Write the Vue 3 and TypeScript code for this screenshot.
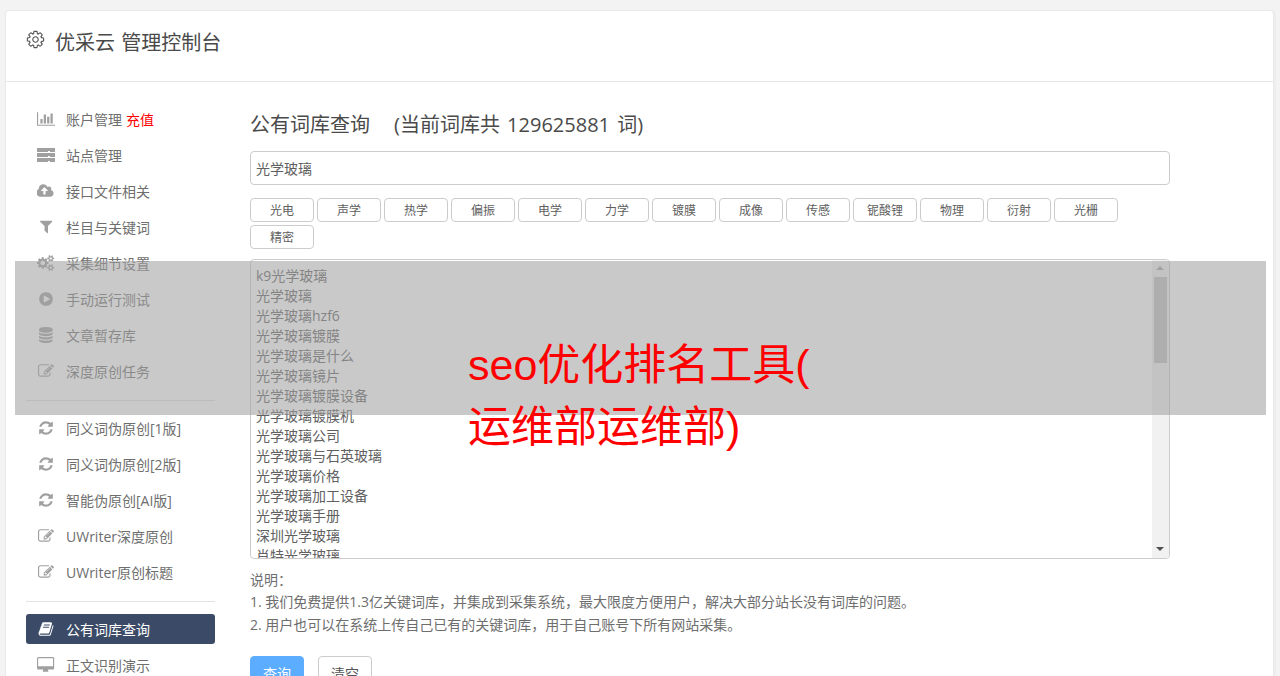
<script setup lang="ts">
interface Icon { box: string; d: string }
interface Item { label: string; icon: Icon; extra?: string; active?: boolean }

const chart: Icon = { box: '0 0 2048 1792', d: 'M640 896v512h-256v-512h256zm384-512v1024h-256v-1024h256zm1024 1152v128h-2048v-1536h128v1408h1920zm-640-896v768h-256v-768h256zm384-384v1152h-256v-1152h256z' }
const server: Icon = { box: '0 0 18 16', d: 'M0 1h18v4h-5v-1h-2v1h-11zM0 6h18v4h-5v-1h-2v1h-11zM0 11h18v4h-5v-1h-2v1h-11z' }
const cloud: Icon = { box: '0 0 1920 1792', d: 'M1216 864q0-14-9-23l-352-352q-9-9-23-9t-23 9l-351 351q-10 12-10 24 0 14 9 23t23 9h224v352q0 13 9.5 22.5t22.5 9.5h192q13 0 22.5-9.5t9.5-22.5v-352h224q13 0 22.5-9.5t9.5-22.5zm640 288q0 159-112.5 271.5t-271.5 112.5h-1088q-185 0-316.5-131.5t-131.5-316.5q0-130 70-240t188-165q-2-30-2-43 0-212 150-362t362-150q156 0 285.5 87t188.5 231q71-62 166-62 106 0 181 75t75 181q0 76-41 138 130 31 213.5 135.5t83.5 238.5z' }
const filter: Icon = { box: '0 0 1408 1792', d: 'M1403 229q17 41-14 70l-493 493v742q0 42-39 59-13 5-25 5-27 0-45-19l-256-256q-19-19-19-45v-486l-493-493q-31-29-14-70 17-39 59-39h1280q42 0 59 39z' }
const cogs: Icon = { box: '0 0 1920 1792', d: 'M896 896q0-106-75-181t-181-75-181 75-75 181 75 181 181 75 181-75 75-181zm768 512q0-52-38-90t-90-38-90 38-38 90q0 53 37.5 90.5t90.5 37.5 90.5-37.5 37.5-90.5zm0-1024q0-52-38-90t-90-38-90 38-38 90q0 53 37.5 90.5t90.5 37.5 90.5-37.5 37.5-90.5zm-384 421v185q0 10-7 19.5t-16 10.5l-155 24q-11 35-32 76 34 48 90 115 7 11 7 20 0 12-7 19-23 30-82.5 89.5t-78.5 59.5q-11 0-21-7l-115-90q-37 19-77 31-11 108-23 155-7 24-30 24h-186q-11 0-20-7.5t-10-17.5l-23-153q-34-10-75-31l-118 89q-7 7-20 7-11 0-21-8-144-133-144-160 0-9 7-19 10-14 41-53t47-61q-23-44-35-82l-152-24q-10-1-17-9.5t-7-19.5v-185q0-10 7-19.5t16-10.5l155-24q11-35 32-76-34-48-90-115-7-11-7-20 0-12 7-20 22-30 82-89t79-59q11 0 21 7l115 90q34-18 77-32 11-108 23-154 7-24 30-24h186q11 0 20 7.5t10 17.5l23 153q34 10 75 31l118-89q8-7 20-7 11 0 21 8 144 133 144 160 0 8-7 19-12 16-42 54t-45 60q23 48 34 82l152 23q10 2 17 10.5t7 19.5zm640 533v140q0 16-149 31-12 27-30 52 51 113 51 138 0 4-4 7-122 71-124 71-8 0-46-47t-52-68q-20 2-30 2t-30-2q-14 21-52 68t-46 47q-2 0-124-71-4-3-4-7 0-25 51-138-18-25-30-52-149-15-149-31v-140q0-16 149-31 13-29 30-52-51-113-51-138 0-4 4-7 4-2 35-20t59-34 30-16q8 0 46 46.5t52 67.5q20-2 30-2t30 2q51-71 92-112l6-2q4 0 124 70 4 3 4 7 0 25-51 138 17 23 30 52 149 15 149 31zm0-1024v140q0 16-149 31-12 27-30 52 51 113 51 138 0 4-4 7-122 71-124 71-8 0-46-47t-52-68q-20 2-30 2t-30-2q-14 21-52 68t-46 47q-2 0-124-71-4-3-4-7 0-25 51-138-18-25-30-52-149-15-149-31v-140q0-16 149-31 13-29 30-52-51-113-51-138 0-4 4-7 4-2 35-20t59-34 30-16q8 0 46 46.5t52 67.5q20-2 30-2t30 2q51-71 92-112l6-2q4 0 124 70 4 3 4 7 0 25-51 138 17 23 30 52 149 15 149 31z' }
const play: Icon = { box: '0 0 1792 1792', d: 'M896 128q209 0 385.5 103t279.5 279.5 103 385.5-103 385.5-279.5 279.5-385.5 103-385.5-103-279.5-279.5-103-385.5 103-385.5 279.5-279.5 385.5-103zm384 823q32-18 32-55t-32-55l-544-320q-31-19-64-1-32 19-32 56v640q0 37 32 56 16 8 32 8 17 0 32-9z' }
const db: Icon = { box: '0 0 1536 1792', d: 'M768 768q237 0 443-43t325-127v170q0 69-103 128t-280 93.5-385 34.5-385-34.5-280-93.5-103-128v-170q119 84 325 127t443 43zm0 768q237 0 443-43t325-127v170q0 69-103 128t-280 93.5-385 34.5-385-34.5-280-93.5-103-128v-170q119 84 325 127t443 43zm0-384q237 0 443-43t325-127v170q0 69-103 128t-280 93.5-385 34.5-385-34.5-280-93.5-103-128v-170q119 84 325 127t443 43zm0-1152q208 0 385 34.5t280 93.5 103 128v128q0 69-103 128t-280 93.5-385 34.5-385-34.5-280-93.5-103-128v-128q0-69 103-128t280-93.5 385-34.5z' }
const edit: Icon = { box: '0 0 1880 1792', d: 'M888 1184l116-116-152-152-116 116v56h96v96h56zm440-720q-16-16-33 1l-350 350q-17 17-1 33t33-1l350-350q17-17 1-33zm80 594v190q0 119-84.5 203.5t-203.5 84.5h-832q-119 0-203.5-84.5t-84.5-203.5v-832q0-119 84.5-203.5t203.5-84.5h832q63 0 117 25 15 7 18 23 3 17-9 29l-49 49q-14 14-32 8-23-6-45-6h-832q-66 0-113 47t-47 113v832q0 66 47 113t113 47h832q66 0 113-47t47-113v-126q0-13 9-22l64-64q15-15 35-7t20 29zm-96-738l288 288-672 672h-288v-288zm444 132l-92 92-288-288 92-92q28-28 68-28t68 28l152 152q28 28 28 68t-28 68z' }
const refresh: Icon = { box: '0 0 1792 1792', d: 'M1639 1056q0 5-1 7-64 268-268 434.5t-478 166.5q-146 0-282.5-55t-243.5-157l-129 129q-19 19-45 19t-45-19-19-45v-448q0-26 19-45t45-19h448q26 0 45 19t19 45-19 45l-137 137q71 66 161 102t187 36q134 0 250-65t186-179q11-17 53-117 8-23 30-23h192q13 0 22.5 9.5t9.5 22.5zm25-800v448q0 26-19 45t-45 19h-448q-26 0-45-19t-19-45 19-45l138-138q-148-137-349-137-134 0-250 65t-186 179q-11 17-53 117-8 23-30 23h-199q-13 0-22.5-9.5t-9.5-22.5v-7q65-268 270-434.5t480-166.5q146 0 284 55.5t245 156.5l130-129q19-19 45-19t45 19 19 45z' }
const book: Icon = { box: '0 0 1792 1792', d: 'M1703 478q40 57 18 129l-275 906q-19 64-76.5 107.5t-122.5 43.5h-923q-77 0-148.5-53.5t-99.5-131.5q-24-67-2-127 0-4 3-27t4-37q1-8-3-21.5t-3-19.5q2-11 8-21t16.5-23.5 16.5-23.5q23-38 45-91.5t30-91.5q3-10 .5-30t-.5-28q3-11 17-28t17-23q21-36 42-92t25-90q1-9-2.5-32t.5-28q4-13 22-30.5t22-22.5q19-26 42.5-84.5t27.5-96.5q1-8-3-25.5t-2-26.5q2-8 9-18t18-23 17-21q8-12 16.5-30.5t15-35 16-36 19.5-32 26.5-23.5 36-11.5 47.5 5.5l-1 3q38-9 51-9h761q74 0 114 56t18 130l-274 906q-36 119-71.5 153.5t-128.5 34.5h-869q-27 0-38 15-11 16-1 43 24 70 144 70h923q29 0 56-15.5t35-41.5l300-987q7-22 5-57 38 15 59 43zm-1064 2q-4 13 2 22.5t20 9.5h608q13 0 25.5-9.5t16.5-22.5l21-64q4-13-2-22.5t-20-9.5h-608q-13 0-25.5 9.5t-16.5 22.5zm-83 256q-4 13 2 22.5t20 9.5h608q13 0 25.5-9.5t16.5-22.5l21-64q4-13-2-22.5t-20-9.5h-608q-13 0-25.5 9.5t-16.5 22.5z' }
const desktop: Icon = { box: '0 0 1920 1792', d: 'M1792 992v-832q0-13-9.5-22.5t-22.5-9.5h-1600q-13 0-22.5 9.5t-9.5 22.5v832q0 13 9.5 22.5t22.5 9.5h1600q13 0 22.5-9.5t9.5-22.5zm128-832v1088q0 66-47 113t-113 47h-544q0 37 16 77.5t32 71 16 43.5q0 26-19 45t-45 19h-512q-26 0-45-19t-19-45q0-14 16-44t32-70 16-78h-544q-66 0-113-47t-47-113v-1088q0-66 47-113t113-47h1632q66 0 113 47t47 113z' }
const cog = 'M1152 896q0-106-75-181t-181-75-181 75-75 181 75 181 181 75 181-75 75-181zm512-109v222q0 12-8 23t-20 13l-185 28q-19 54-39 91 35 50 107 138 10 12 10 25t-9 23q-27 37-99 108t-94 71q-12 0-26-9l-138-108q-44 23-91 38-16 136-29 186-7 28-36 28h-222q-14 0-24.5-8.5t-11.5-21.5l-28-184q-49-16-90-37l-141 107q-10 9-25 9-14 0-25-11-126-114-165-168-7-10-7-23 0-12 8-23 15-21 51-66.5t54-70.5q-27-50-41-99l-183-27q-13-2-21-12.5t-8-23.5v-222q0-12 8-23t19-13l186-28q14-46 39-92-40-57-107-138-10-12-10-24 0-10 9-23 26-36 98.5-107.5t94.5-71.5q13 0 26 10l138 107q44-23 91-38 16-136 29-186 7-28 36-28h222q14 0 24.5 8.5t11.5 21.5l28 184q49 16 90 37l142-107q9-9 24-9 13 0 25 10 129 119 165 170 7 8 7 22 0 12-8 23-15 21-51 66.5t-54 70.5q26 50 41 98l183 28q13 2 21 12.5t8 23.5z'

const groups: Item[][] = [
  [
    { label: '账户管理', icon: chart, extra: '充值' },
    { label: '站点管理', icon: server },
    { label: '接口文件相关', icon: cloud },
    { label: '栏目与关键词', icon: filter },
    { label: '采集细节设置', icon: cogs },
    { label: '手动运行测试', icon: play },
    { label: '文章暂存库', icon: db },
    { label: '深度原创任务', icon: edit },
  ],
  [
    { label: '同义词伪原创[1版]', icon: refresh },
    { label: '同义词伪原创[2版]', icon: refresh },
    { label: '智能伪原创[AI版]', icon: refresh },
    { label: 'UWriter深度原创', icon: edit },
    { label: 'UWriter原创标题', icon: edit },
  ],
  [
    { label: '公有词库查询', icon: book, active: true },
    { label: '正文识别演示', icon: desktop },
  ],
]

const tags: string[] = ['光电', '声学', '热学', '偏振', '电学', '力学', '镀膜', '成像', '传感', '铌酸锂', '物理', '衍射', '光栅', '精密']
const words: string[] = ['k9光学玻璃', '光学玻璃', '光学玻璃hzf6', '光学玻璃镀膜', '光学玻璃是什么', '光学玻璃镜片', '光学玻璃镀膜设备', '光学玻璃镀膜机', '光学玻璃公司', '光学玻璃与石英玻璃', '光学玻璃价格', '光学玻璃加工设备', '光学玻璃手册', '深圳光学玻璃', '肖特光学玻璃']
</script>

<template>
  <div class="page">
    <div class="card">
      <header class="head">
        <svg class="gear" viewBox="0 0 1792 1792" width="19" height="19" aria-hidden="true"><path :d="cog" /></svg>
        <h1 class="brand">优采云 管理控制台</h1>
      </header>
      <div class="body">
        <nav class="side">
          <template v-for="(group, g) in groups" :key="g">
            <hr v-if="g > 0" class="rule" />
            <ul class="menu">
              <li v-for="item in group" :key="item.label" class="item" :class="{ active: item.active }">
                <span class="ico"><svg :viewBox="item.icon.box" height="16" aria-hidden="true"><path :d="item.icon.d" /></svg></span>
                <span>{{ item.label }}</span>
                <span v-if="item.extra" class="extra">{{ item.extra }}</span>
              </li>
            </ul>
          </template>
        </nav>
        <main class="main">
          <h2 class="title"><span class="title-a">公有词库查询</span>(当前词库共 129625881 词)</h2>
          <input class="query" type="text" value="光学玻璃" />
          <div class="tags">
            <button v-for="t in tags" :key="t" class="tag" type="button">{{ t }}</button>
          </div>
          <div class="list">
            <div class="lines"><div v-for="w in words" :key="w" class="line">{{ w }}</div></div>
            <div class="bar">
              <span class="arrow up"></span>
              <span class="track"><span class="thumb"></span></span>
              <span class="arrow down"></span>
            </div>
          </div>
          <div class="notes">
            <p class="note-head">说明：</p>
            <p>1. 我们免费提供1.3亿关键词库，并集成到采集系统，最大限度方便用户，解决大部分站长没有词库的问题。</p>
            <p>2. 用户也可以在系统上传自己已有的关键词库，用于自己账号下所有网站采集。</p>
          </div>
          <div class="actions">
            <button class="btn primary" type="button">查询</button>
            <button class="btn" type="button">清空</button>
          </div>
        </main>
      </div>
    </div>
    <div class="veil"></div>
    <div class="promo"><div>seo优化排名工具(</div><div>运维部运维部)</div></div>
  </div>
</template>

<style>
html, body { margin: 0; height: 100%; overflow: hidden; background: #f3f3f3; }
</style>

<style scoped>
.page {
  position: relative;
  height: 676px;
  overflow: hidden;
  padding: 10px 5px 0;
  box-sizing: border-box;
  background: #f3f3f3;
  font-family: "Open Sans", "Noto Sans CJK SC", sans-serif;
  color: #666;
}
.card {
  width: 1269px;
  box-sizing: border-box;
  background: #fff;
  border: 1px solid #e9e9e9;
  border-radius: 4px;
  height: 800px;
  box-shadow: 2px 0 0 #eee;
}
.head {
  height: 60px;
  display: flex;
  align-items: center;
  padding: 0 0 10px 20px;
  border-bottom: 1px solid #e7e7e7;
  box-sizing: content-box;
}
.gear { fill: none; stroke: #555; stroke-width: 105; overflow: visible; margin-top: -3px; }
.brand { margin: 0 0 0 10px; font-size: 20px; font-weight: 400; color: #4a4a4a; word-spacing: 1px; }
.body { display: flex; padding-top: 22px; }
.side { width: 189px; margin-left: 20px; flex: none; }
.menu { list-style: none; margin: 0; padding: 0; display: flex; flex-direction: column; gap: 6px; }
.item {
  height: 30px;
  display: flex;
  align-items: center;
  padding-left: 11px;
  font-size: 14px;
  color: #6e6e6e;
  border-radius: 3px;
}
.ico { width: 18px; margin-right: 11px; display: flex; justify-content: center; flex: none; }
.ico svg { fill: #a0a0a0; display: block; }
.extra { color: #f00; margin-left: 4px; }
.item.active { background: #3b4a66; color: #fff; }
.item.active .ico svg { fill: #fff; }
.rule { border: 0; border-top: 1px solid #e2e2e2; margin: 14px 0 12px; }
.main { margin-left: 35px; width: 920px; flex: none; }
.title { margin: 7px 0 0; font-size: 20px; line-height: 28px; font-weight: 400; color: #4a4a4a; word-spacing: 2px; }
.title-a { margin-right: 24px; }
.query {
  display: block;
  width: 100%;
  height: 34px;
  margin-top: 12px;
  padding: 0 5px;
  box-sizing: border-box;
  border: 1px solid #ccc;
  border-radius: 4px;
  font: 14px "Open Sans", "Noto Sans CJK SC", sans-serif;
  color: #606060;
  outline: none;
}
.tags { display: flex; flex-wrap: wrap; gap: 3px; margin-top: 13px; }
.tag {
  width: 64px;
  height: 24px;
  padding: 0;
  background: #fff;
  border: 1px solid #ccc;
  border-radius: 4px;
  font: 12px "Open Sans", "Noto Sans CJK SC", sans-serif;
  color: #606060;
}
.list {
  display: flex;
  height: 300px;
  margin-top: 10px;
  box-sizing: border-box;
  border: 1px solid #ccc;
  border-radius: 4px;
  overflow: hidden;
}
.lines { flex: 1; padding: 6px 5px; font-size: 14px; line-height: 20px; color: #606060; overflow: hidden; }
.bar { width: 17px; flex: none; background: #f1f1f1; display: flex; flex-direction: column; align-items: center; }
.arrow { height: 17px; flex: none; position: relative; width: 100%; }
.arrow::after {
  content: "";
  position: absolute;
  left: 4px;
  border-left: 4px solid transparent;
  border-right: 4px solid transparent;
}
.arrow.up::after { top: 6px; border-bottom: 4px solid #a3a3a3; }
.arrow.down::after { top: 6px; border-top: 4px solid #505050; }
.track { flex: 1; width: 100%; padding: 0 2px; box-sizing: border-box; }
.thumb { display: block; height: 86px; background: #c1c1c1; }
.notes { margin-top: 10px; font-size: 14px; color: #6e6e6e; }
.notes p { margin: 0; line-height: 23px; }
.notes .note-head { line-height: 21px; }
.actions { display: flex; gap: 14px; margin-top: 20px; }
.btn {
  width: 54px;
  height: 34px;
  padding: 0;
  background: #fff;
  border: 1px solid #ccc;
  border-radius: 4px;
  font: 14px "Open Sans", "Noto Sans CJK SC", sans-serif;
  color: #555;
}
.btn.primary { background: #5cadff; border-color: #5cadff; color: #fff; }
.veil {
  position: absolute;
  left: 15px;
  top: 261px;
  width: 1251px;
  height: 154px;
  background: rgba(160, 160, 160, 0.57);
}
.promo {
  position: absolute;
  left: 468px;
  top: 334px;
  font-size: 43px;
  line-height: 62px;
  color: #f00;
  white-space: nowrap;
  font-family: "Liberation Sans", "Noto Sans CJK SC", sans-serif;
}
</style>
